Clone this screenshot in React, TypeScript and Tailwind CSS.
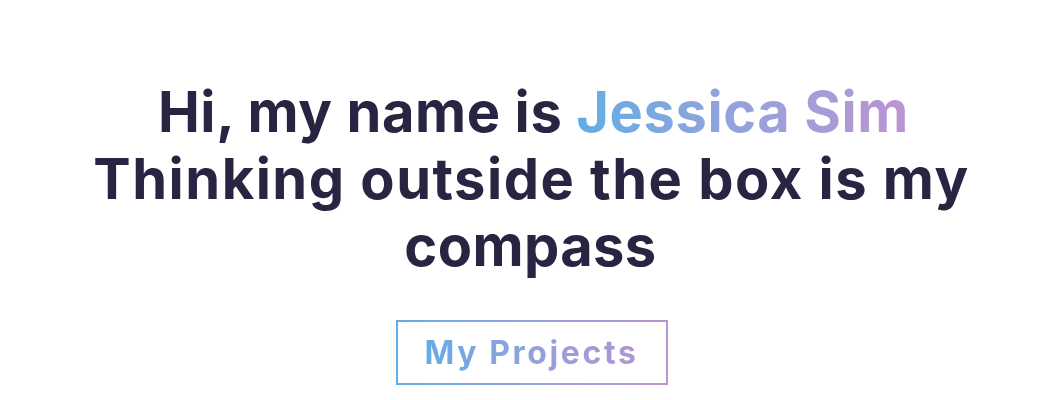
import React from "react";

export default function App() {
  return (
    <div className="min-h-[400px] w-full bg-white flex flex-col items-center pt-[79px]" style={{ fontFamily: "Inter, 'DejaVu Sans', sans-serif" }}>
      <h1 className="text-center font-bold text-[56px] leading-[67px] text-[#272541]">
        <span className="block tracking-[0.6px] pl-[8px]">
          Hi, my name is{" "}
          <span className="bg-gradient-to-r from-[#60ade6] to-[#bb94d2] bg-clip-text text-transparent">Jessica Sim</span>
        </span>
        <span className="block tracking-[1.5px] pl-[4px]">Thinking outside the box is my</span>
        <span className="block tracking-[0.4px] pl-[2px]">compass</span>
      </h1>
      <a
        href="#"
        className="mt-[40px] ml-[4px] block p-[2px] bg-gradient-to-r from-[#60ade6] to-[#bb94d2]"
      >
        <span className="flex items-center justify-center bg-white w-[268px] h-[61px]">
          <span className="text-[32px] font-bold tracking-[2.6px] bg-gradient-to-r from-[#66abe4] to-[#b095d3] bg-clip-text text-transparent">
            My Projects
          </span>
        </span>
      </a>
    </div>
  );
}
